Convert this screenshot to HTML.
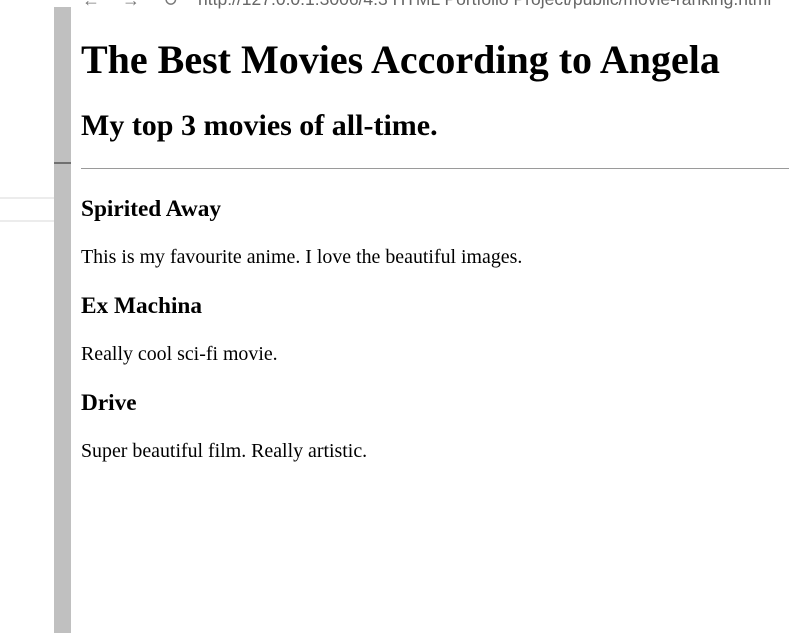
<!DOCTYPE html>
<html><head><meta charset="utf-8"><style>
html,body{margin:0;padding:0;background:#fff;width:789px;height:633px;overflow:hidden;position:relative;font-family:"Liberation Serif",serif;color:#000}
.a{position:absolute;white-space:nowrap;margin:0}
.bar{position:absolute;left:54px;top:7px;width:17px;height:626px;background:#c0c0c0}
.bar2{position:absolute;left:54px;top:162px;width:17px;height:2px;background:#707070}
.box{position:absolute;left:0;top:197px;width:70px;height:21px;border-top:2px solid #ececec;border-bottom:2px solid #ececec}
.url{position:absolute;left:198px;top:-11px;font-family:"Liberation Sans",sans-serif;font-size:17.5px;color:#666;white-space:nowrap}
.nav{position:absolute;top:-10px;font-family:"Liberation Sans",sans-serif;font-size:18px;color:#777}
h1{font-size:40px;font-weight:bold}
h2{font-size:30px;font-weight:bold}
h3{font-size:23.3px;font-weight:bold}
p{font-size:19.9px}
hr{position:absolute;left:81px;top:168px;width:708px;margin:0;border:0;border-top:1px solid #9a9a9a;height:0}
</style></head><body>
<div class="box"></div>
<div class="bar"></div><div class="bar2"></div>
<div class="nav" style="left:82px">←</div>
<div class="nav" style="left:122px">→</div>
<div class="nav" style="left:163px">↻</div>
<div class="url">http://127.0.0.1:3006/4.3 HTML Portfolio Project/public/movie-ranking.html</div>
<h1 class="a" style="left:81px;top:36px">The Best Movies According to Angela</h1>
<h2 class="a" style="left:81px;top:109px">My top 3 movies of all-time.</h2>
<hr>
<h3 class="a" style="left:81px;top:196px">Spirited Away</h3>
<p class="a" style="left:81px;top:246px">This is my favourite anime. I love the beautiful images.</p>
<h3 class="a" style="left:81px;top:293px">Ex Machina</h3>
<p class="a" style="left:81px;top:343px">Really cool sci-fi movie.</p>
<h3 class="a" style="left:81px;top:390px">Drive</h3>
<p class="a" style="left:81px;top:440px">Super beautiful film. Really artistic.</p>
</body></html>
